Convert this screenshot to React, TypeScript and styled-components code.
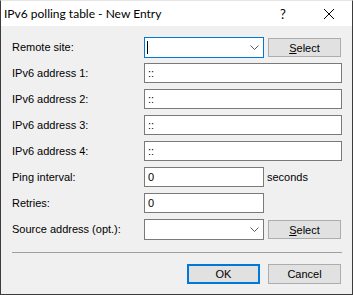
import React from "react";
import styled, { createGlobalStyle } from "styled-components";

const GlobalStyle = createGlobalStyle`
  html, body {
    margin: 0;
    padding: 0;
    background: #ffffff;
  }
  * {
    box-sizing: border-box;
  }
`;

const Window = styled.div`
  display: flex;
  flex-direction: column;
  width: 353px;
  height: 295px;
  background: #f0f0f0;
  border: 1px solid #3c3c3c;
  border-top-color: #e6e6e6;
  font-family: "Liberation Sans", Arial, sans-serif;
  font-size: 11px;
  color: #000000;
`;

const TitleBar = styled.div`
  display: flex;
  align-items: center;
  height: 25px;
  flex-shrink: 0;
  background: #ffffff;
`;

const Title = styled.div`
  flex: 1;
  padding-left: 3px;
  font-family: Lato, "Noto Sans", sans-serif;
  font-size: 12px;
  white-space: nowrap;
`;

const TitleButton = styled.div`
  display: flex;
  align-items: center;
  justify-content: center;
  width: 46px;
  height: 25px;
  font-family: Lato, "Noto Sans", sans-serif;
  font-size: 13px;
`;

const Content = styled.div`
  display: flex;
  flex-direction: column;
  padding: 11px 10px 10px 11px;
`;

const Form = styled.div`
  display: grid;
  grid-template-columns: 132px 120px 78px;
  grid-auto-rows: 26px;
  align-items: start;
`;

const Label = styled.div<{ $h?: number }>`
  height: ${(p) => p.$h ?? 20}px;
  line-height: ${(p) => p.$h ?? 20}px;
  white-space: nowrap;
`;

const Combo = styled.div<{ $focused?: boolean }>`
  display: flex;
  align-items: center;
  width: 120px;
  height: 21px;
  padding: 0 4px 0 2px;
  background: #ffffff;
  border: 1px solid ${(p) => (p.$focused ? "#0078d7" : "#7a7a7a")};
`;

const ComboValue = styled.div`
  flex: 1;
  display: flex;
  align-items: center;
  height: 100%;
`;

const Caret = styled.span`
  display: block;
  width: 1px;
  height: 13px;
  background: #000000;
`;

const TextBox = styled.div<{ $wide?: boolean }>`
  grid-column: ${(p) => (p.$wide ? "span 2" : "auto")};
  width: ${(p) => (p.$wide ? 198 : 120)}px;
  height: 20px;
  padding-left: 3px;
  line-height: 18px;
  background: #ffffff;
  border: 1px solid #7a7a7a;
  white-space: nowrap;
`;

const Unit = styled.div`
  height: 20px;
  padding-left: 3px;
  line-height: 20px;
`;

const Button = styled.button<{ $default?: boolean; $h?: number }>`
  width: 73px;
  height: ${(p) => p.$h ?? 20}px;
  padding: 0;
  background: #e1e1e1;
  border: ${(p) => (p.$default ? "2px solid #0078d7" : "1px solid #adadad")};
  border-radius: 0;
  font-family: "Liberation Sans", Arial, sans-serif;
  font-size: 11px;
  color: #000000;
  u {
    text-underline-offset: 1px;
  }
`;

const SelectButton = styled(Button)`
  margin: 1px 0 0 4px;
`;

const Separator = styled.div`
  height: 1px;
  margin-top: 7px;
  background: #a0a0a0;
`;

const Footer = styled.div`
  display: flex;
  justify-content: flex-end;
  gap: 8px;
  margin-top: 11px;
  padding-right: 1px;
`;

const Chevron = () => (
  <svg width="9" height="5" viewBox="0 0 9 5">
    <polyline points="0.5,0.5 4.5,4.5 8.5,0.5" fill="none" stroke="#5a5a5a" strokeWidth="1" />
  </svg>
);

const CloseIcon = () => (
  <svg width="10" height="10" viewBox="0 0 10 10">
    <path d="M0 0 L10 10 M10 0 L0 10" stroke="#000000" strokeWidth="1" />
  </svg>
);

const App = () => {
  const addresses = ["IPv6 address 1:", "IPv6 address 2:", "IPv6 address 3:", "IPv6 address 4:"];
  return (
    <>
      <GlobalStyle />
      <Window>
        <TitleBar>
          <Title>IPv6 polling table - New Entry</Title>
          <TitleButton>?</TitleButton>
          <TitleButton>
            <CloseIcon />
          </TitleButton>
        </TitleBar>
        <Content>
          <Form>
            <Label $h={21}>Remote site:</Label>
            <Combo $focused>
              <ComboValue>
                <Caret />
              </ComboValue>
              <Chevron />
            </Combo>
            <SelectButton $h={19}>
              <u>S</u>elect
            </SelectButton>

            {addresses.map((a) => (
              <React.Fragment key={a}>
                <Label>{a}</Label>
                <TextBox $wide>::</TextBox>
              </React.Fragment>
            ))}

            <Label>Ping interval:</Label>
            <TextBox>0</TextBox>
            <Unit>seconds</Unit>

            <Label>Retries:</Label>
            <TextBox>0</TextBox>
            <div />

            <Label $h={21}>Source address (opt.):</Label>
            <Combo>
              <ComboValue />
              <Chevron />
            </Combo>
            <SelectButton $h={19}>
              <u>S</u>elect
            </SelectButton>
          </Form>
          <Separator />
          <Footer>
            <Button $default>OK</Button>
            <Button>Cancel</Button>
          </Footer>
        </Content>
      </Window>
    </>
  );
};

export default App;
